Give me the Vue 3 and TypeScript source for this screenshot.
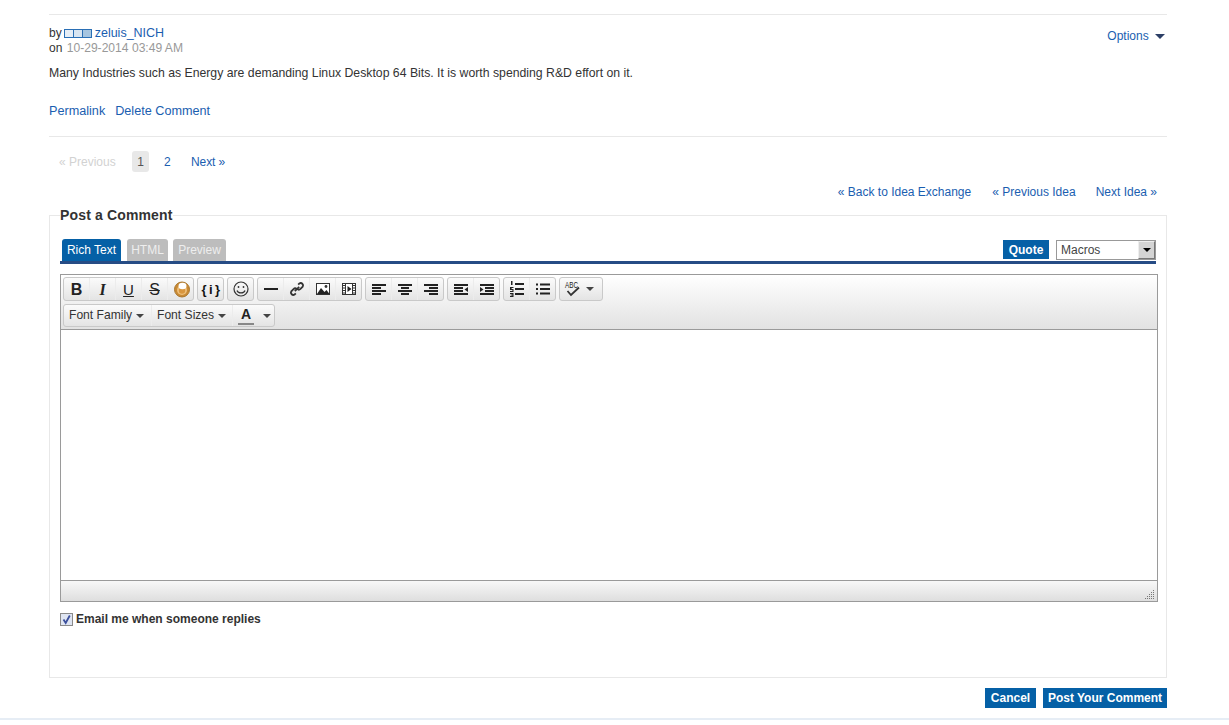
<script setup lang="ts">
interface Tab { label: string; width: number; active?: boolean }
const tabs: Tab[] = [
  { label: 'Rich Text', width: 59, active: true },
  { label: 'HTML', width: 41 },
  { label: 'Preview', width: 53 },
]
</script>

<template>
  <div class="page">
    <article class="comment">
      <div class="head">
        <div class="meta">
          <div class="by">
            by
            <span class="rank"><i class="r1"></i><i class="r2"></i><i class="r3"></i></span>
            <a class="link author">zeluis_NICH</a>
          </div>
          <div>on <span class="date">10-29-2014 03:49 AM</span></div>
        </div>
        <a class="link options">Options <span class="caret blue"></span></a>
      </div>
      <p class="text">Many Industries such as Energy are demanding Linux Desktop 64 Bits. It is worth spending R&amp;D effort on it.</p>
      <div class="actions">
        <a class="link">Permalink</a>
        <a class="link">Delete Comment</a>
      </div>
    </article>

    <nav class="pager">
      <span class="disabled">« Previous</span>
      <span class="current">1</span>
      <a class="link two">2</a>
      <a class="link next">Next »</a>
    </nav>

    <nav class="idea-nav">
      <a class="link">« Back to Idea Exchange</a>
      <a class="link">« Previous Idea</a>
      <a class="link">Next Idea »</a>
    </nav>

    <fieldset class="post">
      <legend>Post a Comment</legend>
      <div class="tabbar">
        <div class="tabs">
          <span
            v-for="tab in tabs"
            :key="tab.label"
            class="tab"
            :class="{ active: tab.active }"
            :style="{ width: tab.width + 'px' }"
          >{{ tab.label }}</span>
        </div>
        <div class="tools">
          <button class="solid quote">Quote</button>
          <div class="macros">
            <span>Macros</span>
            <span class="macro-btn"><span class="caret dark"></span></span>
          </div>
        </div>
      </div>

      <div class="editor">
        <div class="toolbar">
          <div class="row">
            <div class="group">
              <span class="btn glyph bold">B</span>
              <span class="btn glyph italic">I</span>
              <span class="btn glyph under">U</span>
              <span class="btn glyph strike">S</span>
              <span class="btn">
                <svg class="bubble" width="18" height="18" viewBox="0 0 18 18">
                  <circle cx="9" cy="9.500" r="7.500" fill="#c98a34" stroke="#a9762c" />
                  <circle cx="9" cy="10" r="5" fill="#eec07c" />
                  <circle cx="9" cy="10.500" r="3.200" fill="#d9963e" />
                  <ellipse cx="9.500" cy="6" rx="4" ry="3.200" fill="#fff" />
                </svg>
              </span>
            </div>
            <div class="group">
              <span class="btn glyph code">{i}</span>
            </div>
            <div class="group">
              <span class="btn">
                <svg width="18" height="18" viewBox="0 0 18 18" fill="none" stroke="#333" stroke-width="1.200">
                  <circle cx="9" cy="9" r="7" />
                  <circle cx="6.500" cy="7" r=".9" fill="#333" stroke="none" />
                  <circle cx="11.500" cy="7" r=".9" fill="#333" stroke="none" />
                  <path d="M5 10.500c1 3.200 7 3.200 8 0" />
                </svg>
              </span>
            </div>
            <div class="group">
              <span class="btn">
                <svg width="16" height="16" viewBox="0 0 16 16"><rect x="1" y="7" width="14" height="2" fill="#222" /></svg>
              </span>
              <span class="btn">
                <svg width="16" height="16" viewBox="0 0 16 16" fill="none" stroke="#333" stroke-width="1.800">
                  <path d="M9.200 3.600l1.200-1.200a2.400 2.400 0 0 1 3.300 3.300l-2.200 2.200a2.400 2.400 0 0 1-3.300 0" />
                  <path d="M6.800 12.400l-1.200 1.200a2.400 2.400 0 0 1-3.300-3.300l2.200-2.200a2.400 2.400 0 0 1 3.300 0" />
                  <path d="M5.800 10.200l4.400-4.400" />
                </svg>
              </span>
              <span class="btn">
                <svg width="16" height="16" viewBox="0 0 16 16">
                  <rect x="1.500" y="2.500" width="13" height="11" fill="#fff" stroke="#333" />
                  <circle cx="11" cy="5.500" r="1.400" fill="#333" />
                  <path d="M2 13l4-6 3.500 4 2-2 3 4z" fill="#222" />
                </svg>
              </span>
              <span class="btn">
                <svg width="16" height="16" viewBox="0 0 16 16">
                  <rect x="1.500" y="2.500" width="13" height="11" fill="#fff" stroke="#333" />
                  <path d="M4.500 3v10M11.500 3v10" stroke="#333" />
                  <path d="M2 4.500h2M2 7h2M2 9.500h2M2 12h2M12 4.500h2M12 7h2M12 9.500h2M12 12h2" stroke="#333" />
                  <path d="M6.500 5l4 3-4 3z" fill="#222" />
                </svg>
              </span>
            </div>
            <div class="group">
              <span class="btn">
                <svg width="16" height="16" viewBox="0 0 16 16" fill="#222"><rect x="1" y="3" width="14" height="2" /><rect x="1" y="6" width="9" height="2" /><rect x="1" y="9" width="14" height="2" /><rect x="1" y="12" width="9" height="2" /></svg>
              </span>
              <span class="btn">
                <svg width="16" height="16" viewBox="0 0 16 16" fill="#222"><rect x="1" y="3" width="14" height="2" /><rect x="4" y="6" width="8" height="2" /><rect x="1" y="9" width="14" height="2" /><rect x="4" y="12" width="8" height="2" /></svg>
              </span>
              <span class="btn">
                <svg width="16" height="16" viewBox="0 0 16 16" fill="#222"><rect x="1" y="3" width="14" height="2" /><rect x="6" y="6" width="9" height="2" /><rect x="1" y="9" width="14" height="2" /><rect x="6" y="12" width="9" height="2" /></svg>
              </span>
            </div>
            <div class="group">
              <span class="btn">
                <svg width="16" height="16" viewBox="0 0 16 16" fill="#222"><rect x="1" y="3" width="14" height="2" /><rect x="1" y="6" width="9" height="2" /><rect x="1" y="9" width="9" height="2" /><rect x="1" y="12" width="14" height="2" /><path d="M15 6v5l-3.500-2.500z" /></svg>
              </span>
              <span class="btn">
                <svg width="16" height="16" viewBox="0 0 16 16" fill="#222"><rect x="1" y="3" width="14" height="2" /><rect x="6" y="6" width="9" height="2" /><rect x="6" y="9" width="9" height="2" /><rect x="1" y="12" width="14" height="2" /><path d="M1 6v5l3.500-2.500z" /></svg>
              </span>
            </div>
            <div class="group">
              <span class="btn">
                <svg width="16" height="18" viewBox="0 0 16 18" fill="#222">
                  <rect x="6" y="3" width="9" height="2" /><rect x="6" y="8" width="9" height="2" /><rect x="6" y="13" width="9" height="2" />
                  <path d="M2 1h1.500v4H2zM1 7h3.500v1H2.600v1h1.900v3H1v-1h2.400v-1H1zM1 13h3.500v4H1v-1h2.400v-.5H1.600v-1h1.800V14H1z" />
                </svg>
              </span>
              <span class="btn">
                <svg width="16" height="16" viewBox="0 0 16 16" fill="#222">
                  <rect x="5" y="2.500" width="10" height="2" /><rect x="5" y="7" width="10" height="2" /><rect x="5" y="11.500" width="10" height="2" />
                  <rect x="1" y="2.500" width="2" height="2" /><rect x="1" y="7" width="2" height="2" /><rect x="1" y="11.500" width="2" height="2" />
                </svg>
              </span>
            </div>
            <div class="group">
              <span class="btn">
                <svg width="17" height="20" viewBox="0 0 17 20" fill="none">
                  <text x="1" y="9" font-size="8.500" textLength="13" lengthAdjust="spacingAndGlyphs" font-family="Liberation Sans, sans-serif" fill="#222">ABC</text>
                  <path d="M3.500 12l3.500 4 8-7.500" stroke="#333" stroke-width="1.800" />
                </svg>
              </span>
              <span class="arrow-btn"><span class="caret"></span></span>
            </div>
          </div>
          <div class="row">
            <div class="group">
              <span class="select family">Font Family<span class="caret"></span></span>
              <span class="select sizes">Font Sizes<span class="caret"></span></span>
              <span class="select color">
                <span class="color-a">A</span>
                <span class="caret"></span>
              </span>
            </div>
          </div>
        </div>
        <div class="area"></div>
        <div class="status">
          <svg width="10" height="10" viewBox="0 0 10 10" fill="#777">
            <rect x="8" y="1" width="1" height="1" />
            <rect x="6" y="3" width="1" height="1" /><rect x="8" y="3" width="1" height="1" />
            <rect x="4" y="5" width="1" height="1" /><rect x="6" y="5" width="1" height="1" /><rect x="8" y="5" width="1" height="1" />
            <rect x="2" y="7" width="1" height="1" /><rect x="4" y="7" width="1" height="1" /><rect x="6" y="7" width="1" height="1" /><rect x="8" y="7" width="1" height="1" />
            <rect x="0" y="9" width="1" height="1" /><rect x="2" y="9" width="1" height="1" /><rect x="4" y="9" width="1" height="1" /><rect x="6" y="9" width="1" height="1" /><rect x="8" y="9" width="1" height="1" />
          </svg>
        </div>
      </div>

      <label class="notify">
        <span class="check">
          <svg width="11" height="11" viewBox="0 0 11 11" fill="none"><path d="M2.500 5.500l2.200 3.500L8.800 1.500" stroke="#3b4f9c" stroke-width="1.800" /></svg>
        </span>
        Email me when someone replies
      </label>
    </fieldset>

    <div class="submit">
      <button class="solid cancel">Cancel</button>
      <button class="solid send">Post Your Comment</button>
    </div>
  </div>
  <div class="page-end"></div>
</template>

<style>
html, body { margin: 0; background: #fff; }
</style>

<style scoped>
.page {
  box-sizing: border-box;
  width: 1118px;
  margin-left: 49px;
  padding-top: 14px;
  font: 12px/15px "Liberation Sans", Arial, sans-serif;
  color: #333;
}
.link { color: #1a5eb0; text-decoration: none; }
.comment {
  border-top: 1px solid #e8e8e8;
  border-bottom: 1px solid #e8e8e8;
  height: 121px;
}
.head { display: flex; justify-content: space-between; padding-top: 11px; }
.by { display: flex; align-items: center; gap: 2px; }
.author { font-size: 12.500px; }
.date { color: #999; margin-left: 1px; font-size: 12.100px; }
.rank { display: inline-flex; margin: 0 1px 0 0; border: 1px solid #2a6fb5; width: 26px; height: 7px; }
.rank i { flex: 1; border-left: 1px solid #2a6fb5; }
.rank i:first-child { border-left: 0; }
.r1 { background: #e6eef6; }
.r2 { background: #d8e5f1; }
.r3 { background: #a6c5e0; }
.options { margin-top: 3px; margin-right: 2px; }
.caret {
  display: inline-block;
  width: 0; height: 0;
  border-left: 4px solid transparent;
  border-right: 4px solid transparent;
  border-top: 4px solid #444;
  vertical-align: 2px;
}
.caret.blue { margin-left: 3px; border-top-color: #2c3f66; border-left-width: 5px; border-right-width: 5px; border-top-width: 5px; vertical-align: 1px; }
.text { margin: 10px 0 0; font-size: 12.250px; }
.actions { margin-top: 23px; display: flex; gap: 10px; font-size: 12.650px; }
.pager { display: flex; align-items: center; height: 21px; margin-top: 14px; padding-left: 10px; }
.disabled { color: #d2d2d2; width: 73px; margin-top: 2px; }
.current { width: 17px; height: 21px; line-height: 23px; text-align: center; background: #e8e8e8; border-radius: 3px; color: #555; }
.two { margin-left: 15px; width: 7px; margin-top: 2px; }
.next { margin-left: 20px; margin-top: 2px; letter-spacing: -.1px; }
.idea-nav { display: flex; justify-content: flex-end; gap: 21px; padding-right: 10px; margin-top: 13px; height: 15px; }
.idea-nav a:last-child { margin-left: -1px; }
.post {
  box-sizing: border-box;
  margin: 7px 0 0;
  padding: 0 8px 0 10px;
  min-width: 0;
  width: 1118px;
  height: 471px;
  border: 1px solid #e8e8e8;
  border-radius: 0;
}
.post legend { padding: 0; font: bold 14px/16px "Liberation Sans", Arial, sans-serif; letter-spacing: .15px; color: #333; }
.tabbar {
  display: flex;
  justify-content: space-between;
  align-items: flex-end;
  width: 1096px;
  height: 25px;
  margin-top: 13px;
  border-bottom: 3px solid #264c85;
}
.tabs { display: flex; padding-left: 2px; gap: 5px; }
.tab {
  height: 22px;
  line-height: 22px;
  text-align: center;
  background: #bdbdbd;
  color: #eee;
  border-radius: 3px 3px 0 0;
}
.tab:first-child { margin-right: 1px; }
.tab.active { background: #0560a6; color: #fff; }
.tools { display: flex; gap: 7px; align-items: flex-start; height: 21px; }
.solid {
  border: 0;
  padding: 0;
  height: 20px;
  background: #0560a6;
  color: #fff;
  font: bold 12px "Liberation Sans", Arial, sans-serif;
}
.cancel { width: 51px; }
.send { width: 124px; }
.quote { height: 19px; width: 46px; }
.macros {
  box-sizing: border-box;
  width: 100px;
  height: 20px;
  border: 1px solid #999;
  display: flex;
  justify-content: space-between;
  padding-left: 4px;
  line-height: 18px;
  color: #444;
}
.macro-btn {
  width: 17px;
  height: 18px;
  box-sizing: border-box;
  border: 1px solid #777;
  border-top-color: #eee;
  border-left-color: #eee;
  background: #d4d4d4;
  display: flex;
  align-items: center;
  justify-content: center;
}
.caret.dark { border-top-color: #000; vertical-align: 0; }
.editor {
  box-sizing: border-box;
  width: 1098px;
  height: 328px;
  margin-top: 10px;
  border: 1px solid #9a9a9a;
  display: flex;
  flex-direction: column;
}
.toolbar {
  box-sizing: border-box;
  height: 55px;
  padding: 2px 2px 0;
  background: linear-gradient(#fff, #e2e2e2);
  border-bottom: 1px solid #9a9a9a;
  display: flex;
  flex-direction: column;
  gap: 3px;
}
.row { display: flex; gap: 3px; }
.row:last-child .group { height: 23px; }
.group {
  box-sizing: border-box;
  display: flex;
  height: 24px;
  border: 1px solid #c9c9c9;
  border-radius: 3px;
  background: linear-gradient(#fbfbfb, #e4e4e4);
}
.btn {
  width: 26px;
  height: 22px;
  display: flex;
  align-items: center;
  justify-content: center;
  border-left: 1px solid #ececec;
  box-sizing: border-box;
}
.btn:first-child { border-left: 0; width: 25px; }
.bubble { margin-left: 3px; }
.glyph { font-size: 16px; color: #222; }
.bold { font-weight: bold; }
.italic { font-style: italic; font-family: "Liberation Serif", serif; font-weight: bold; }
.under { text-decoration: underline; font-size: 15px; }
.strike { text-decoration: line-through; }
.code { font: bold 13px "Liberation Sans", sans-serif; letter-spacing: 2.500px; padding-left: 3px; color: #111; }
.arrow-btn { width: 16px; display: flex; align-items: center; padding-left: 1px; }
.arrow-btn .caret { vertical-align: 0; }
.select { display: flex; align-items: center; gap: 4px; height: 21px; padding-left: 5px; box-sizing: border-box; color: #333; font-size: 12.100px; }
.family { width: 87px; }
.sizes { width: 81px; border-left: 1px solid #ececec; }
.color { width: 42px; border-left: 1px solid #ececec; gap: 9px; }
.color-a {
  display: block;
  width: 16px;
  text-align: center;
  font: bold 14px/16px "Liberation Sans", Arial, sans-serif;
  color: #222;
  border-bottom: 2px solid #888;
  height: 17px;
}
.area { flex: 1; background: #fff; }
.status {
  box-sizing: border-box;
  height: 21px;
  background: linear-gradient(#f8f8f8, #dedede);
  border-top: 1px solid #9a9a9a;
  display: flex;
  justify-content: flex-end;
  align-items: flex-end;
  padding: 0 2px 2px 0;
}
.notify { display: flex; align-items: center; gap: 3px; margin-top: 10px; font-weight: bold; line-height: 14px; color: #333; }
.check {
  box-sizing: border-box;
  width: 13px;
  height: 13px;
  border: 1px solid #8a8a8a;
  background: #dfe5f2;
  display: flex;
  align-items: center;
  justify-content: center;
}
.submit { display: flex; justify-content: flex-end; gap: 7px; margin-top: 10px; }
.page-end { margin-top: 10px; height: 2px; background: #e6edf5; }
</style>
